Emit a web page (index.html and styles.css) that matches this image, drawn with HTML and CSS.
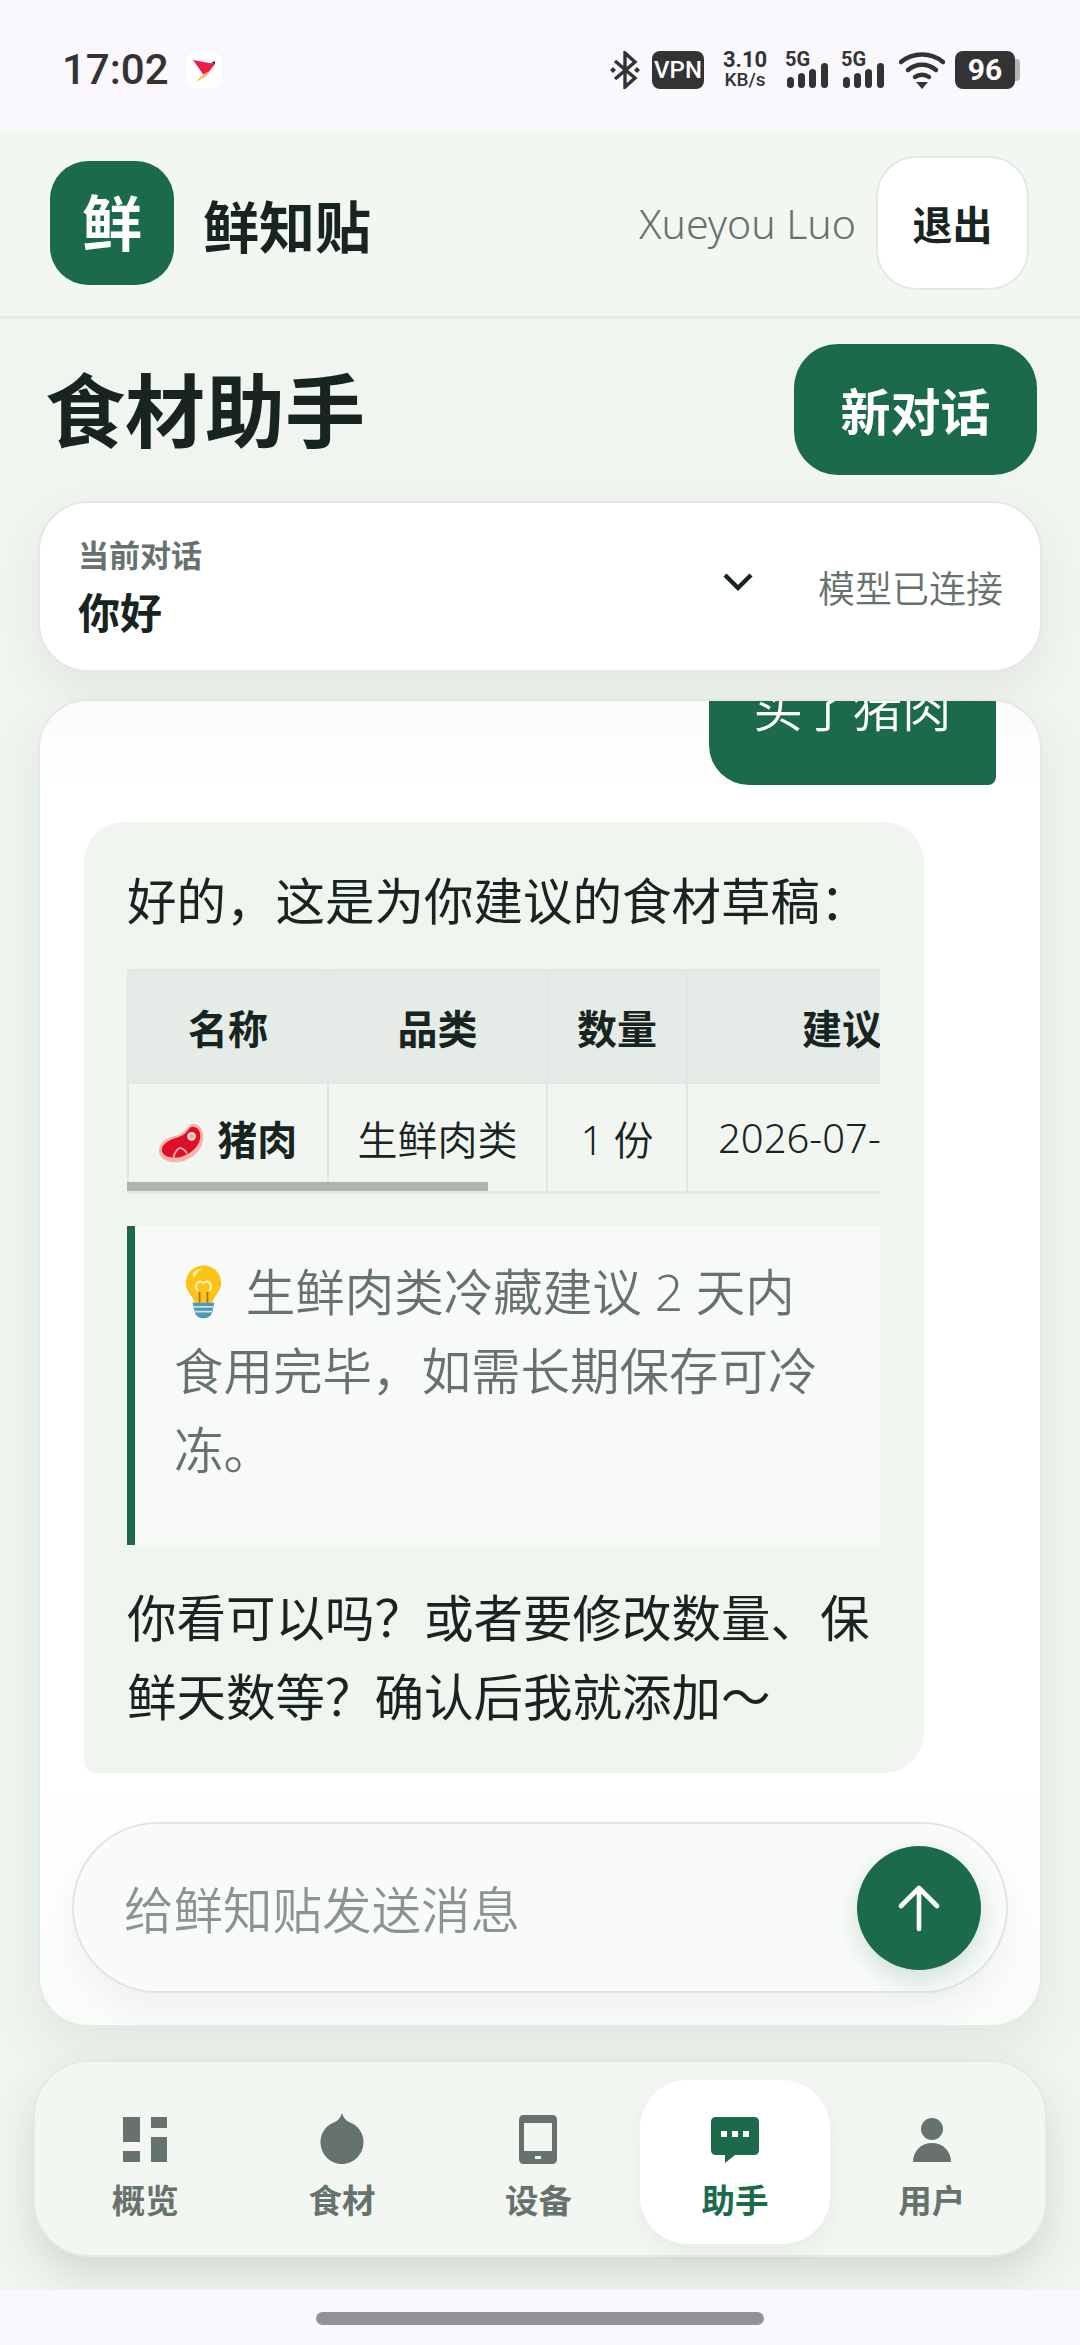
FILE: index.html
```html
<!DOCTYPE html>
<html lang="zh-CN">
<head>
    <meta charset="UTF-8">
    <meta name="viewport" content="width=device-width, initial-scale=1.0">
    <title>食材助手</title>
    <link rel="stylesheet" href="styles.css">
</head>
<body>
    <div class="screen">
        <div class="status-bar">
            <div class="status-left">
                <span class="clock">17:02</span>
                <span class="app-badge">
                    <svg width="34" height="36" viewBox="0 0 34 36">
                        <path d="M6 8 L28 12 L18 25 Z" fill="#ee1c4a"/>
                        <path d="M18 25 L22 19 L14 24 L9 30 Z" fill="#f4c46a"/>
                        <path d="M24 11 L28 9 L28 12 Z" fill="#222"/>
                    </svg>
                </span>
            </div>
            <div class="status-right">
                <svg class="bt-icon" width="32" height="38" viewBox="0 0 32 38">
                    <path d="M6 10 L26 27 L16 36 V2 L26 11 L6 28" fill="none" stroke="#333" stroke-width="3.4"/>
                    <path d="M1 19 l3 -3 l3 3 l-3 3 Z M25 19 l3 -3 l3 3 l-3 3 Z" fill="#333"/>
                </svg>
                <span class="vpn-tag">VPN</span>
                <span class="net-speed"><b>3.10</b><b class="net-unit">KB/s</b></span>
                <span class="signal">
                    <b class="signal-label">5G</b>
                    <svg width="44" height="26" viewBox="0 0 44 26">
                        <rect x="2" y="14" width="7" height="11" rx="3.5" fill="#333"/>
                        <rect x="13" y="10" width="7" height="15" rx="3.5" fill="#333"/>
                        <rect x="24" y="6" width="7" height="19" rx="3.5" fill="#333"/>
                        <rect x="36" y="0" width="7" height="25" rx="3.5" fill="#333"/>
                    </svg>
                </span>
                <span class="signal">
                    <b class="signal-label">5G</b>
                    <svg width="44" height="26" viewBox="0 0 44 26">
                        <rect x="2" y="14" width="7" height="11" rx="3.5" fill="#333"/>
                        <rect x="13" y="10" width="7" height="15" rx="3.5" fill="#333"/>
                        <rect x="24" y="6" width="7" height="19" rx="3.5" fill="#333"/>
                        <rect x="36" y="0" width="7" height="25" rx="3.5" fill="#333"/>
                    </svg>
                </span>
                <svg class="wifi-icon" width="46" height="38" viewBox="0 0 46 38">
                    <path d="M2 11 C14 1 32 1 44 11" fill="none" stroke="#333" stroke-width="4.4" stroke-linecap="round"/>
                    <path d="M9 19 C17 12 29 12 37 19" fill="none" stroke="#333" stroke-width="4.4" stroke-linecap="round"/>
                    <path d="M16 26 C20 23 26 23 30 26" fill="none" stroke="#333" stroke-width="4.4" stroke-linecap="round"/>
                    <path d="M17 31 H29 L23 38 Z" fill="#333"/>
                </svg>
                <span class="battery"><span class="battery-level">96</span><span class="battery-tip"></span></span>
            </div>
        </div>

        <header class="app-header">
            <div class="brand">
                <div class="brand-logo">鲜</div>
                <div class="brand-name">鲜知贴</div>
            </div>
            <div class="account">
                <span class="account-name">Xueyou Luo</span>
                <button type="button" class="logout-button">退出</button>
            </div>
        </header>

        <div class="title-row">
            <h1>食材助手</h1>
            <button type="button" class="new-chat-button">新对话</button>
        </div>

        <div class="session-card">
            <div class="session-info">
                <div class="session-label">当前对话</div>
                <div class="session-name">你好</div>
            </div>
            <svg class="session-chevron" width="32" height="20" viewBox="0 0 32 20">
                <path d="M3 3 L16 16 L29 3" fill="none" stroke="#17241f" stroke-width="4.4"/>
            </svg>
            <div class="session-status">模型已连接</div>
        </div>

        <section class="chat-card">
            <div class="messages">
                <div class="bubble-user">买了猪肉</div>
                <div class="bubble-bot">
                    <p class="bot-text">好的&#xFF0C;这是为你建议的食材草稿&#xFF1A;</p>
                    <div class="table-wrap">
                        <table class="draft-table">
                            <colgroup>
                                <col class="col-name">
                                <col class="col-type">
                                <col class="col-qty">
                                <col class="col-date">
                            </colgroup>
                            <thead>
                                <tr>
                                    <th>名称</th>
                                    <th>品类</th>
                                    <th>数量</th>
                                    <th>建议日期</th>
                                </tr>
                            </thead>
                            <tbody>
                                <tr>
                                    <td class="cell-name">
                                        <svg class="emoji-meat" width="45" height="41" viewBox="0 0 47 41">
                                            <path d="M36 0 C44 1 47 8 46 16 C45 28 34 38 20 40 C9 41 0 36 0 28 C0 20 7 15 15 13 C22 11 26 9 29 5 C31 2 33 0 36 0 Z" fill="#f9b3aa"/>
                                            <path d="M35 3 C41 3 44 9 43 15 C42 24 32 33 20 35 C10 36 3 33 3 27 C3 22 9 17 17 15 C24 13 28 10 30 7 C31 5 33 3 35 3 Z" fill="#de1029"/>
                                            <path d="M15 35 C17 28 19 26 22 25 C26 26 28 28 29 31" fill="none" stroke="#f9b3aa" stroke-width="1.8"/>
                                            <circle cx="34" cy="13" r="4.6" fill="#f8d6d2"/>
                                            <circle cx="34" cy="13" r="2.2" fill="#e8a5ad"/>
                                        </svg>
                                        <span>猪肉</span>
                                    </td>
                                    <td>生鲜肉类</td>
                                    <td>1 份</td>
                                    <td class="cell-date">2026-07-09</td>
                                </tr>
                            </tbody>
                        </table>
                        <div class="table-scroll-thumb"></div>
                    </div>
                    <blockquote class="tip">
                        <svg class="emoji-bulb" width="59" height="56" viewBox="0 0 60 56">
                            <path d="M21 38 C20 31 12 27 12 18 C12 8 20 0 30 0 C40 0 48 8 48 18 C48 27 40 31 39 38 Z" fill="#fcc419"/>
                            <path d="M19 8 C22 4 26 3 29 3 C25 6 22 9 20 13 Z" fill="#fff0a8"/>
                            <path d="M26 38 V27 M34 38 V27" fill="none" stroke="#a9701c" stroke-width="1.8"/>
                            <path d="M24 26 C20 19 25 14 30 18 C35 14 40 19 36 26" fill="none" stroke="#fff3b8" stroke-width="2"/>
                            <path d="M19 38 H41 L39 47 C37 56 23 56 21 47 Z" fill="#4f97b7"/>
                            <path d="M20 42 H40 M21 47 H39" stroke="#c9e4e0" stroke-width="1.8"/>
                        </svg>
                        生鲜肉类冷藏建议 2 天内食用完毕&#xFF0C;如需长期保存可冷冻。
                    </blockquote>
                    <p class="bot-text bot-text-last">你看可以吗&#xFF1F;或者要修改数量、保鲜天数等&#xFF1F;确认后我就添加&#xFF5E;</p>
                </div>
            </div>
            <div class="composer">
                <span class="composer-placeholder">给鲜知贴发送消息</span>
                <button type="button" class="send-button" aria-label="发送">
                    <svg width="44" height="48" viewBox="0 0 44 48">
                        <path d="M22 45 V4 M4 22 L22 4 L40 22" fill="none" stroke="#fff" stroke-width="4.6" stroke-linecap="round" stroke-linejoin="round"/>
                    </svg>
                </button>
            </div>
        </section>

        <nav class="tab-bar">
            <div class="tab-item">
                <svg class="tab-icon" width="44" height="52" viewBox="0 0 44 52">
                    <path d="M0 4 H17 V29 H0 Z M0 38 H17 V49 H0 Z M28 4 H44 V15 H28 Z M28 24 H44 V49 H28 Z" fill="#66726d"/>
                </svg>
                <span>概览</span>
            </div>
            <div class="tab-item">
                <svg class="tab-icon" width="44" height="52" viewBox="0 0 44 52">
                    <path d="M22 0 C23.5 5 26 7.5 30 9.5 C38 12.5 43.5 20 43.5 29 C43.5 41 34 51 22 51 C10 51 0.5 41 0.5 29 C0.5 20 6 12.5 14 9.5 C18 7.5 20.5 5 22 0 Z" fill="#66726d"/>
                </svg>
                <span>食材</span>
            </div>
            <div class="tab-item">
                <svg class="tab-icon" width="38" height="52" viewBox="0 0 38 52">
                    <path fill-rule="evenodd" d="M5 2 H33 Q38 2 38 7 V46 Q38 51 33 51 H5 Q0 51 0 46 V7 Q0 2 5 2 Z M5 10 V38 H33 V10 Z M16 43 V46 H22 V43 Z" fill="#66726d"/>
                </svg>
                <span>设备</span>
            </div>
            <div class="tab-item tab-active">
                <svg class="tab-icon" width="48" height="52" viewBox="0 0 48 52">
                    <path fill-rule="evenodd" d="M5 4 H43 Q48 4 48 9 V37 Q48 42 43 42 H24 L14 50 V42 H5 Q0 42 0 37 V9 Q0 4 5 4 Z M10 18 V24 H16 V18 Z M21 18 V24 H27 V18 Z M32 18 V24 H38 V18 Z" fill="#1b6b4b"/>
                </svg>
                <span>助手</span>
            </div>
            <div class="tab-item">
                <svg class="tab-icon" width="38" height="52" viewBox="0 0 38 52">
                    <circle cx="19" cy="16" r="11" fill="#66726d"/>
                    <path d="M0 49 C0 38 8 30 19 30 C30 30 38 38 38 49 Z" fill="#66726d"/>
                </svg>
                <span>用户</span>
            </div>
        </nav>

        <div class="gesture-bar"><div class="gesture-handle"></div></div>
    </div>
</body>
</html>
```

FILE: styles.css
```css
* {
    box-sizing: border-box;
}
body {
    margin: 0;
    font-family: "Noto Sans", "Noto Sans CJK SC", sans-serif;
    color: #17241f;
}
button {
    font-family: inherit;
    border: none;
    padding: 0;
}
.screen {
    width: 1080px;
    height: 2345px;
    overflow: hidden;
    display: flex;
    flex-direction: column;
    background-color: #f1f5f0;
}

/* status bar */
.status-bar {
    height: 130px;
    flex: none;
    padding: 50px 62px 0 62px;
    display: flex;
    justify-content: space-between;
    align-items: flex-start;
    background-color: #faf7fd;
    color: #333;
}
.status-left {
    display: flex;
    align-items: center;
    gap: 18px;
}
.clock {
    font-family: Roboto, sans-serif;
    font-size: 42px;
    font-weight: 500;
    line-height: 40px;
    color: #333;
}
.app-badge {
    width: 34px;
    height: 36px;
    background-color: #fff;
    border-radius: 8px;
}
.app-badge svg {
    display: block;
}
.status-right {
    display: flex;
    align-items: center;
    margin-right: -2px;
    font-family: Roboto, sans-serif;
}
.bt-icon {
    margin-right: 11px;
}
.vpn-tag {
    width: 52px;
    height: 38px;
    background-color: #333;
    color: #fff;
    border-radius: 8px;
    font-size: 24px;
    font-weight: 500;
    line-height: 38px;
    text-align: center;
    margin-right: 18px;
}
.net-speed {
    width: 46px;
    display: flex;
    flex-direction: column;
    align-items: center;
    font-size: 22px;
    line-height: 20px;
    margin-right: 17px;
}
.net-unit {
    font-size: 19px;
    font-weight: 500;
}
.signal {
    width: 46px;
    height: 38px;
    position: relative;
    margin-right: 10px;
    display: flex;
    align-items: flex-end;
}
.signal-label {
    position: absolute;
    left: 0;
    top: -3px;
    font-size: 20px;
    line-height: 22px;
}
.wifi-icon {
    margin-left: 2px;
    margin-right: 10px;
}
.battery {
    display: flex;
    align-items: center;
}
.battery-level {
    width: 60px;
    height: 38px;
    background-color: #333;
    color: #fff;
    border-radius: 8px;
    font-size: 30px;
    font-weight: 700;
    line-height: 38px;
    text-align: center;
}
.battery-tip {
    width: 5px;
    height: 22px;
    background-color: #b5b3b8;
    border-radius: 0 4px 4px 0;
}

/* app header */
.app-header {
    height: 189px;
    flex: none;
    padding: 0 51px 0 50px;
    display: flex;
    justify-content: space-between;
    align-items: center;
    background-color: #f2f7f1;
    border-bottom: 3px solid #e6ebe6;
}
.brand {
    display: flex;
    align-items: center;
    gap: 29px;
}
.brand-logo {
    width: 124px;
    height: 124px;
    background-color: #1b6b4b;
    color: #fff;
    border-radius: 38px;
    font-size: 60px;
    font-weight: 700;
    line-height: 124px;
    text-align: center;
}
.brand-name {
    font-size: 56px;
    font-weight: 700;
}
.account {
    display: flex;
    align-items: center;
    gap: 20px;
}
.account-name {
    font-size: 41px;
    font-weight: 300;
    color: #66726d;
}
.logout-button {
    width: 153px;
    height: 134px;
    background-color: #fff;
    border: 2px solid #e4e9e4;
    border-radius: 40px;
    font-size: 40px;
    font-weight: 700;
    color: #17241f;
}

/* page title */
.title-row {
    height: 131px;
    flex: none;
    margin-top: 25px;
    padding: 0 43px 0 45px;
    display: flex;
    justify-content: space-between;
    align-items: center;
}
h1 {
    margin: 0;
    font-size: 80px;
    font-weight: 700;
    line-height: 131px;
}
.new-chat-button {
    width: 243px;
    height: 131px;
    background-color: #1b6b4b;
    color: #fff;
    border-radius: 44px;
    font-size: 50px;
    font-weight: 700;
}

/* session picker */
.session-card {
    height: 171px;
    flex: none;
    margin: 26px 38px 0 38px;
    padding: 0 37px 0 38px;
    display: flex;
    align-items: center;
    background-color: #fff;
    border: 2px solid #e4e9e4;
    border-radius: 50px;
    box-shadow: 0 16px 40px rgba(30, 60, 45, 0.07);
}
.session-info {
    flex: 1;
    padding-top: 4px;
}
.session-label {
    font-size: 31px;
    font-weight: 700;
    line-height: 44px;
    color: #66726d;
}
.session-name {
    font-size: 42px;
    font-weight: 700;
    line-height: 62px;
    margin-top: 5px;
}
.session-chevron {
    margin-right: 64px;
    margin-top: -10px;
}
.session-status {
    font-size: 37px;
    font-weight: 350;
    color: #66726d;
}

/* chat */
.chat-card {
    height: 1328px;
    flex: none;
    margin: 27px 38px 0 38px;
    padding: 0 32px 32px 32px;
    display: flex;
    flex-direction: column;
    background: linear-gradient(#fafbfa, #fff 90px, #fff 1080px, #f9fbf9);
    border: 2px solid #e4e9e4;
    border-radius: 50px;
    box-shadow: 0 20px 50px rgba(30, 60, 45, 0.08);
    overflow: hidden;
}
.messages {
    flex: 1;
    min-height: 0;
    padding: 0 12px 49px 12px;
    display: flex;
    flex-direction: column;
    justify-content: flex-end;
    gap: 37px;
    overflow: hidden;
}
.bubble-user {
    flex: none;
    align-self: flex-end;
    width: 287px;
    padding: 40px 0 37px 0;
    background-color: #1b6b4b;
    color: #fff;
    border-radius: 40px 40px 8px 40px;
    font-size: 49.5px;
    font-weight: 350;
    line-height: 79px;
    text-align: center;
}
.bubble-bot {
    flex: none;
    width: 840px;
    padding: 40px 44px 36px 43px;
    background-color: #f1f5f0;
    border-radius: 40px 40px 40px 12px;
}
.bot-text {
    margin: 0;
    font-size: 49.5px;
    font-weight: 400;
    line-height: 79px;
}
.bot-text-last {
    margin-top: 34px;
}

.table-wrap {
    position: relative;
    width: 753px;
    height: 225px;
    margin-top: 28px;
    overflow: hidden;
    border-bottom: 3px solid #e2e8e3;
}
.draft-table {
    width: 949px;
    table-layout: fixed;
    border-collapse: collapse;
    font-size: 40px;
    text-align: center;
}
.col-name {
    width: 200px;
}
.col-type {
    width: 219px;
}
.col-qty {
    width: 140px;
}
.col-date {
    width: 390px;
}
.draft-table th,
.draft-table td {
    padding: 0;
    border: 2px solid #e1e7e2;
    white-space: nowrap;
}
.draft-table th {
    height: 113px;
    background-color: #e5ece7;
    font-weight: 700;
}
.draft-table td {
    height: 109px;
    background-color: #f2f6f1;
    font-weight: 350;
}
.draft-table .cell-name {
    font-weight: 700;
}
.draft-table .cell-date {
    text-align: left;
    padding-left: 30px;
}
.emoji-meat {
    vertical-align: -9px;
    margin-right: 3px;
}
.table-scroll-thumb {
    position: absolute;
    left: 0;
    bottom: -3px;
    width: 361px;
    height: 12px;
    background-color: #b2b4b0;
}

.tip {
    width: 753px;
    height: 319px;
    margin: 32px 0 0 0;
    padding: 27px 50px 0 39px;
    background-color: #f8faf7;
    border-left: 8px solid #1b6b4b;
    font-size: 49.5px;
    font-weight: 350;
    line-height: 79px;
    color: #66726d;
}
.emoji-bulb {
    vertical-align: -10px;
}

.composer {
    height: 171px;
    flex: none;
    padding: 0 25px 0 50px;
    display: flex;
    justify-content: space-between;
    align-items: center;
    background-color: #f9fbf8;
    border: 2px solid #e1e6e1;
    border-radius: 86px;
    box-shadow: 0 14px 30px rgba(30, 60, 45, 0.05);
}
.composer-placeholder {
    font-size: 49.5px;
    font-weight: 350;
    color: #8d9490;
}
.send-button {
    width: 124px;
    height: 124px;
    display: flex;
    align-items: center;
    justify-content: center;
    background-color: #1b6b4b;
    border-radius: 50%;
    box-shadow: 0 10px 24px rgba(27, 107, 75, 0.18);
}

/* bottom tabs */
.tab-bar {
    height: 197px;
    flex: none;
    margin: 33px 33px 0 33px;
    padding: 18px 18px 11px 15px;
    display: grid;
    grid-template-columns: repeat(5, 1fr);
    gap: 6px;
    background-color: #f2f7f1;
    border: 2px solid #e4e9e4;
    border-radius: 56px;
    box-shadow: 0 18px 40px rgba(30, 60, 45, 0.14);
}
.tab-item {
    display: flex;
    flex-direction: column;
    align-items: center;
    padding-top: 33px;
    font-size: 33.5px;
    font-weight: 700;
    line-height: 44px;
    color: #66726d;
}
.tab-icon {
    margin-bottom: 13px;
}
.tab-active {
    background-color: #fff;
    border-radius: 48px;
    color: #1b6b4b;
    box-shadow: 0 8px 20px rgba(30, 60, 45, 0.06);
}

.gesture-bar {
    flex: 1;
    margin-top: 33px;
    position: relative;
    display: flex;
    justify-content: center;
    padding-top: 22px;
    background-color: #faf7fd;
}
.gesture-handle {
    width: 448px;
    height: 13px;
    background-color: #949296;
    border-radius: 7px;
}
```
